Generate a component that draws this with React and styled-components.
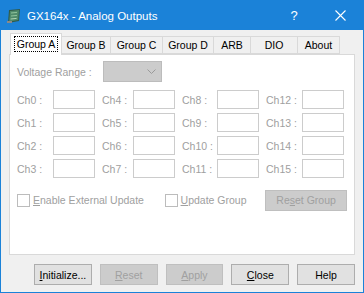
import React from 'react'
import styled, { createGlobalStyle } from 'styled-components'

const GlobalStyle = createGlobalStyle`
  html, body {
    margin: 0;
    padding: 0;
    background: #f0f0f0;
  }
  * { box-sizing: border-box; }
`

const tabs = [
  { label: 'Group A', width: 52 },
  { label: 'Group B', width: 50 },
  { label: 'Group C', width: 53 },
  { label: 'Group D', width: 52 },
  { label: 'ARB', width: 38 },
  { label: 'DIO', width: 48 },
  { label: 'About', width: 43 },
]

const rows = [
  [0, 4, 8, 12],
  [1, 5, 9, 13],
  [2, 6, 10, 14],
  [3, 7, 11, 15],
]

const BoardIcon = () => (
  <svg width="16" height="16" viewBox="0 0 16 16">
    <polygon points="3,2 14,1 13,13 2,15" fill="#2f5a4a" />
    <polygon points="4,3 13,2 12.2,12 3.2,13.6" fill="#4f8a6a" />
    <line x1="5" y1="5" x2="11" y2="4.4" stroke="#9fd0a8" strokeWidth="0.8" />
    <line x1="5" y1="8" x2="11" y2="7.4" stroke="#9fd0a8" strokeWidth="0.8" />
    <line x1="4.6" y1="11" x2="10.6" y2="10.4" stroke="#c9e7c8" strokeWidth="0.8" />
    <rect x="1" y="13" width="5" height="2" fill="#8a8a8a" />
  </svg>
)

const CloseGlyph = () => (
  <svg width="11" height="11" viewBox="0 0 11 11">
    <path d="M0.5 0.5 L10.5 10.5 M10.5 0.5 L0.5 10.5" stroke="#fff" strokeWidth="1.1" />
  </svg>
)

const Chevron = () => (
  <svg width="9" height="6" viewBox="0 0 9 6">
    <path d="M0.5 0.5 L4.5 4.5 L8.5 0.5" stroke="#9a9a9a" strokeWidth="1" fill="none" />
  </svg>
)

const Mn = ({ children }) => <u>{children}</u>

const App = () => {
  return (
    <>
      <GlobalStyle />
      <Window>
        <TitleBar>
          <TitleLeft>
            <BoardIcon />
            <Title>GX164x - Analog Outputs</Title>
          </TitleLeft>
          <TitleButtons>
            <TitleBtn>?</TitleBtn>
            <TitleBtn><CloseGlyph /></TitleBtn>
          </TitleButtons>
        </TitleBar>

        <Body>
          <TabStrip>
            {tabs.map((t, i) => (
              <Tab key={t.label} $active={i === 0} $width={t.width}>
                {i === 0 ? <Focus>{t.label}</Focus> : t.label}
              </Tab>
            ))}
          </TabStrip>

          <Panel>
            <RangeRow>
              <Label>Voltage Range :</Label>
              <Select>
                <Chevron />
              </Select>
            </RangeRow>

            <ChannelGrid>
              {rows.map((r) =>
                r.map((ch, i) => (
                  <React.Fragment key={ch}>
                    <ChLabel $first={i === 0}>Ch{ch} :</ChLabel>
                    <Field />
                  </React.Fragment>
                ))
              )}
            </ChannelGrid>

            <OptionRow>
              <Check $width={148}>
                <Box />
                <Label><Mn>E</Mn>nable External Update</Label>
              </Check>
              <Check $width={101}>
                <Box />
                <Label><Mn>U</Mn>pdate Group</Label>
              </Check>
              <Button $disabled $width={82}>Re<Mn>s</Mn>et Group</Button>
            </OptionRow>
          </Panel>

          <Footer>
            <Button $width={58}><Mn>I</Mn>nitialize...</Button>
            <Button $disabled $width={58}><Mn>R</Mn>eset</Button>
            <Button $disabled $width={58}><Mn>A</Mn>pply</Button>
            <Button $width={58}><Mn>C</Mn>lose</Button>
            <Button $width={58}>Help</Button>
          </Footer>
        </Body>
      </Window>
    </>
  )
}

const Window = styled.div`
  width: 364px;
  height: 293px;
  border: 1px solid #1b82d8;
  background: #f0f0f0;
  display: flex;
  flex-direction: column;
  font-family: "Liberation Sans", Arial, sans-serif;
  font-size: 10.5px;
`

const TitleBar = styled.div`
  height: 29px;
  background: #1b82d8;
  display: flex;
  align-items: center;
  justify-content: space-between;
  padding-left: 5px;
  color: #fff;
`

const TitleLeft = styled.div`
  display: flex;
  align-items: center;
  gap: 5px;
`

const Title = styled.span`
  font-family: "Liberation Sans", Arial, sans-serif;
  font-size: 11.5px;
`

const TitleButtons = styled.div`
  display: flex;
  height: 100%;
`

const TitleBtn = styled.div`
  width: 46px;
  height: 100%;
  display: flex;
  align-items: center;
  justify-content: center;
  font-family: "Liberation Sans", sans-serif;
  font-size: 13px;
`

const Body = styled.div`
  flex: 1;
  padding: 3px 8px 0 8px;
  display: flex;
  flex-direction: column;
`

const TabStrip = styled.div`
  display: flex;
  align-items: flex-end;
  height: 21px;
  padding-left: 2px;
  position: relative;
  z-index: 1;
`

const Tab = styled.div`
  width: ${(p) => p.$width}px;
  height: ${(p) => (p.$active ? 22 : 18)}px;
  margin-bottom: ${(p) => (p.$active ? -1 : 0)}px;
  background: ${(p) => (p.$active ? '#fff' : '#f0f0f0')};
  border: 1px solid #d9d9d9;
  border-bottom: ${(p) => (p.$active ? 'none' : '1px solid #d9d9d9')};
  margin-left: -1px;
  display: flex;
  align-items: center;
  justify-content: center;
  color: #000;
  padding-bottom: ${(p) => (p.$active ? 2 : 0)}px;
`

const Focus = styled.span`
  outline: 1px dotted #000;
  outline-offset: 0;
  padding: 1px 2px;
`

const Panel = styled.div`
  height: 201px;
  background: #fff;
  border: 1px solid #d9d9d9;
  padding: 6px 7px 0 7px;
  display: flex;
  flex-direction: column;
`

const Label = styled.span`
  color: #a0a0a0;
  white-space: nowrap;
  u { text-decoration: underline; }
`

const ChLabel = styled(Label)`
  padding-left: ${(p) => (p.$first ? 0 : 7)}px;
`

const RangeRow = styled.div`
  display: flex;
  align-items: center;
  height: 21px;
  ${Label} { width: 86px; }
`

const Select = styled.div`
  width: 59px;
  height: 21px;
  background: #cccccc;
  border: 1px solid #bcbcbc;
  display: flex;
  align-items: center;
  justify-content: flex-end;
  padding-right: 5px;
`

const ChannelGrid = styled.div`
  margin-top: 8px;
  display: grid;
  grid-template-columns: 36px 42px 38px 42px 42px 42px 43px 42px;
  grid-auto-rows: 19px;
  row-gap: 4px;
  align-items: center;
`

const Field = styled.div`
  width: 42px;
  height: 19px;
  border: 1px solid #cccccc;
  background: #fff;
`

const OptionRow = styled.div`
  margin-top: 12px;
  display: flex;
  align-items: center;
  height: 20px;
`

const Check = styled.label`
  width: ${(p) => p.$width}px;
  display: flex;
  align-items: center;
  gap: 3px;
`

const Box = styled.span`
  width: 13px;
  height: 13px;
  border: 1px solid #bcbcbc;
  background: #fff;
`

const Button = styled.div`
  width: ${(p) => p.$width}px;
  height: 21px;
  display: flex;
  align-items: center;
  justify-content: center;
  background: ${(p) => (p.$disabled ? '#cccccc' : '#e1e1e1')};
  border: 1px solid ${(p) => (p.$disabled ? '#bfbfbf' : '#adadad')};
  color: ${(p) => (p.$disabled ? '#a0a0a0' : '#000')};
  u { text-decoration: underline; }
`

const Footer = styled.div`
  display: flex;
  gap: 8px;
  padding-left: 25px;
  margin-top: 9px;
`

export default App
